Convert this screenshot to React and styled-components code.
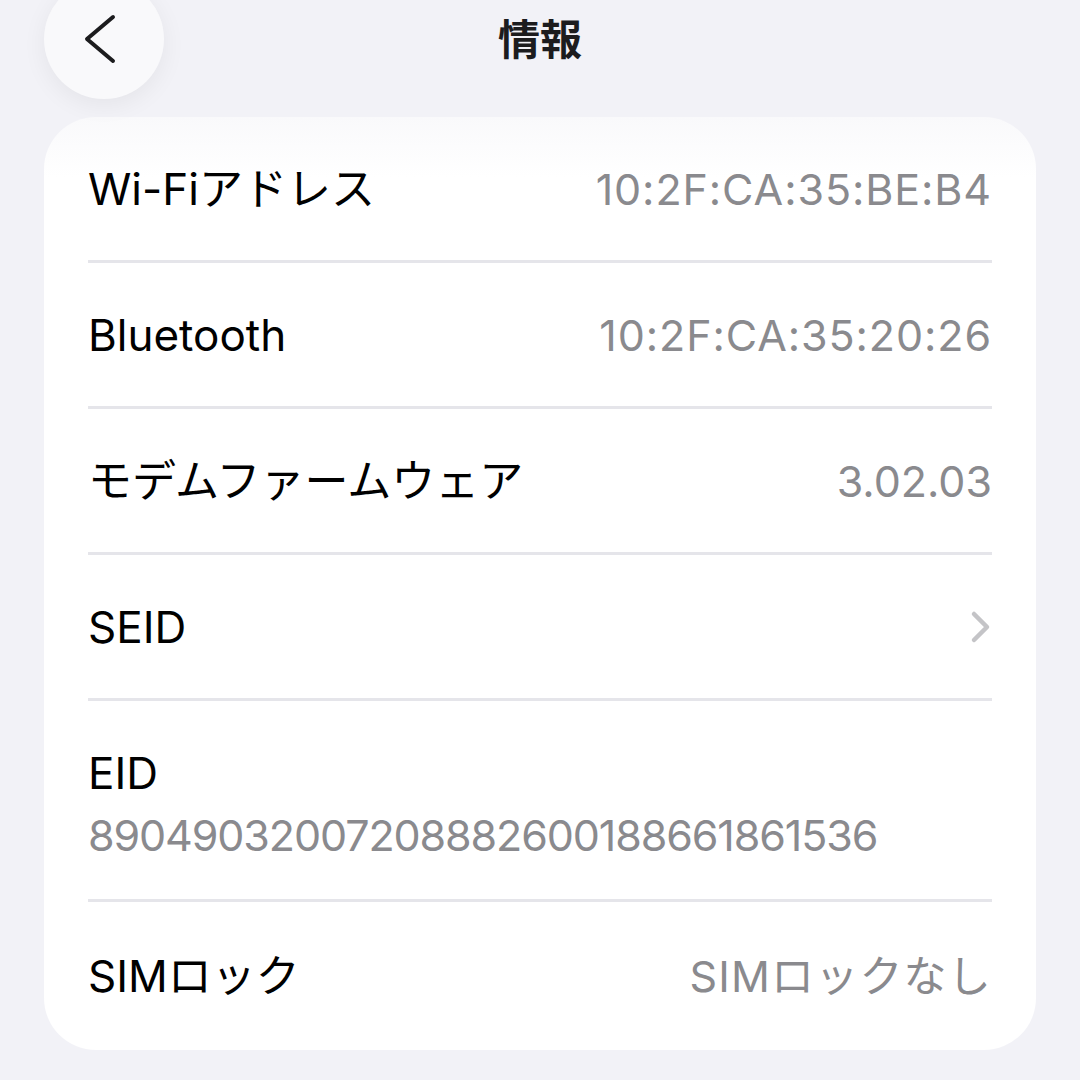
import React from 'react';
import styled, { createGlobalStyle } from 'styled-components';

const rows = [
  { label: 'Wi-Fiアドレス', value: '10:2F:CA:35:BE:B4', spacing: '0.9px' },
  { label: 'Bluetooth', value: '10:2F:CA:35:20:26', spacing: '0.9px' },
  { label: 'モデムファームウェア', value: '3.02.03' },
  { label: 'SEID', chevron: true },
  { label: 'EID', value: '89049032007208882600188661861536', stacked: true, spacing: '-1.1px' },
  { label: 'SIMロック', value: 'SIMロックなし', spacing: '1.2px' },
];

const App = () => {
  return (
    <Page>
      <GlobalStyle />
      <Header>
        <BackButton aria-label="戻る">
          <svg width="34" height="52" viewBox="0 0 34 52" fill="none">
            <path d="M30 4 L4 26 L30 48" stroke="#1c1c1e" strokeWidth="4" strokeLinecap="round" strokeLinejoin="round" />
          </svg>
        </BackButton>
        <Title>情報</Title>
        <span />
      </Header>
      <Card>
        {rows.map((r, i) => (
          <Row key={r.label} $stacked={r.stacked} $last={i === rows.length - 1}>
            <Label>{r.label}</Label>
            {r.value && (
              <Value $spacing={r.spacing}>{r.value}</Value>
            )}
            {r.chevron && (
              <svg width="22" height="34" viewBox="0 0 22 34" fill="none">
                <path d="M4 4 L17 17 L4 30" stroke="#c4c4c7" strokeWidth="4.5" strokeLinecap="round" strokeLinejoin="round" />
              </svg>
            )}
          </Row>
        ))}
      </Card>
    </Page>
  );
};

// --- Styled Components ---

const GlobalStyle = createGlobalStyle`
  html, body {
    margin: 0;
    padding: 0;
    background: #f2f2f7;
  }
  body {
    font-family: Inter, "Noto Sans CJK JP", sans-serif;
    -webkit-font-smoothing: antialiased;
  }
`;

const Page = styled.div`
  width: 1080px;
  height: 1080px;
  overflow: hidden;
  background: #f2f2f7;
`;

const Header = styled.div`
  display: grid;
  grid-template-columns: 1fr auto 1fr;
  align-items: start;
  height: 99px;
`;

const BackButton = styled.button`
  width: 120px;
  height: 120px;
  margin: -21px 0 0 44px;
  padding: 0 8px 0 0;
  border: none;
  border-radius: 50%;
  background: #f9f9fb;
  box-shadow: 0 6px 24px rgba(0, 0, 0, 0.06);
  display: flex;
  align-items: center;
  justify-content: center;
  box-sizing: border-box;
  justify-self: start;
`;

const Title = styled.h1`
  margin: 0;
  line-height: 74px;
  font-size: 42px;
  font-weight: 700;
  color: #1c1c1e;
  font-family: "Noto Sans CJK JP", sans-serif;
`;

const Card = styled.div`
  margin: 18px 44px 0;
  padding: 0 44px;
  border-radius: 52px;
  background: linear-gradient(#f9f9fb 0px, #ffffff 60px);
`;

const Row = styled.div`
  display: flex;
  flex-direction: ${p => (p.$stacked ? 'column' : 'row')};
  align-items: ${p => (p.$stacked ? 'flex-start' : 'center')};
  justify-content: ${p => (p.$stacked ? 'flex-start' : 'space-between')};
  gap: ${p => (p.$stacked ? '10px' : '0')};
  height: ${p => (p.$stacked ? '201px' : p.$last ? '148px' : '146px')};
  padding-top: ${p => (p.$stacked ? '46px' : '0')};
  box-sizing: border-box;
  border-bottom: ${p => (p.$last ? 'none' : '3px solid #e5e5ea')};
`;

const Label = styled.div`
  font-size: 44px;
  line-height: 52px;
  color: #000000;
`;

const Value = styled.div`
  font-size: 43px;
  line-height: 52px;
  color: #8a8a8e;
  letter-spacing: ${p => p.$spacing || '0'};
`;

export default App;
